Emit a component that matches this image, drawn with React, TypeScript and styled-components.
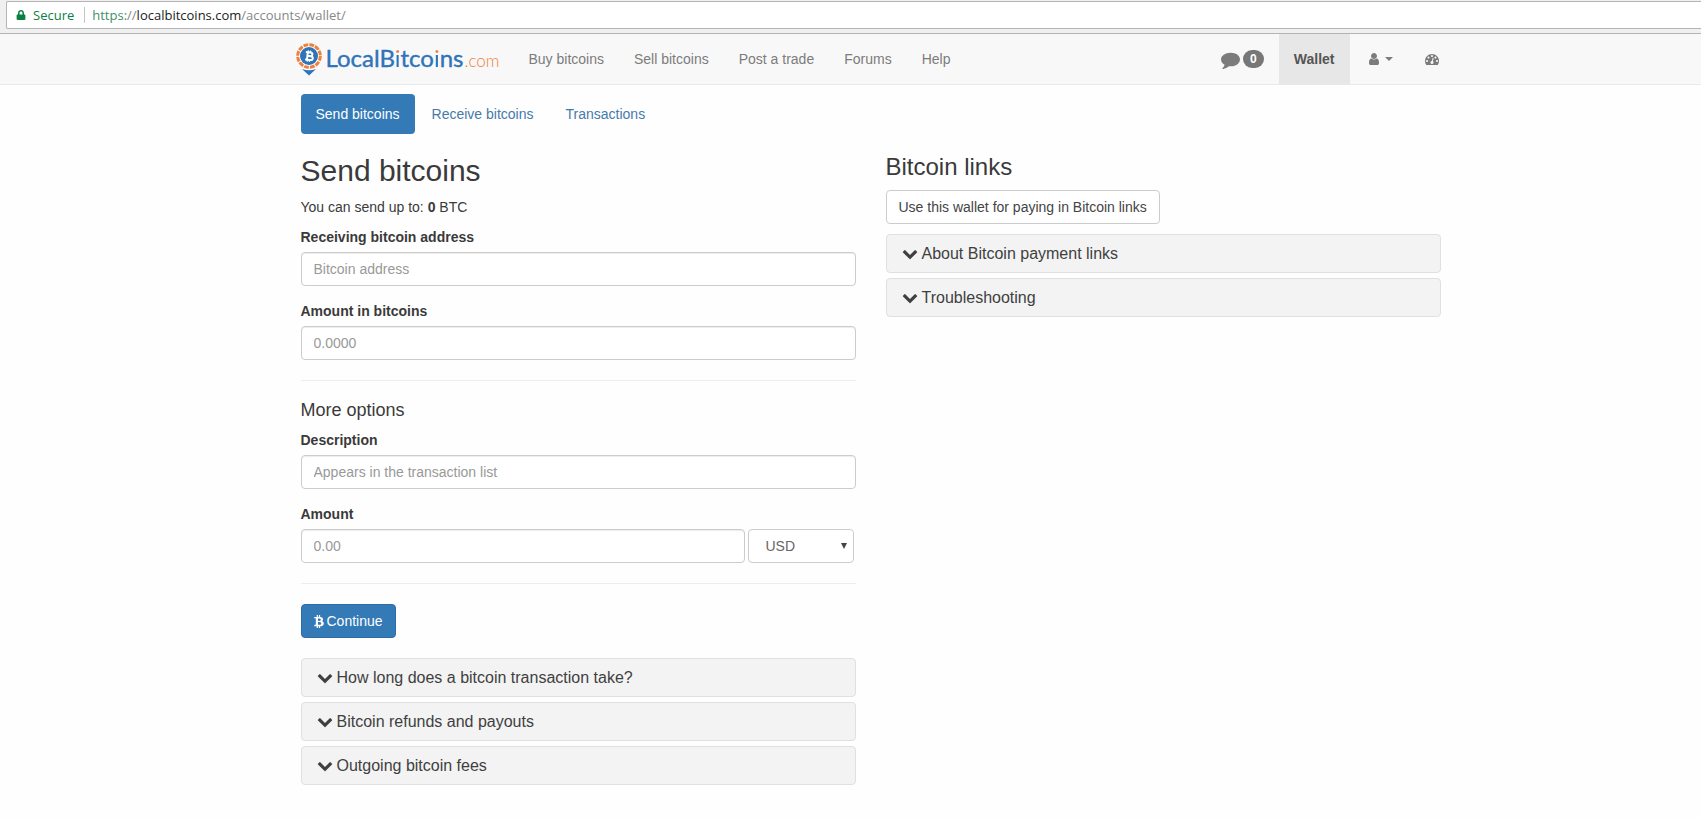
import React from "react";
import styled, { createGlobalStyle } from "styled-components";
import { FaBtc, FaLock } from "react-icons/fa";

const BLUE = "#337ab7";
const LOGO_BLUE = "#2f74b9";
const LOGO_ORANGE = "#ee7f3c";

const GlobalStyle = createGlobalStyle`
  *, *::before, *::after { box-sizing: border-box; }
  body {
    margin: 0;
    background: #fefefe;
    color: #3a3a3a;
    font: 14px/20px "Liberation Sans", Arial, sans-serif;
  }
  input, select, button { font: inherit; }
  a { text-decoration: none; }
`;

const AddressBar = styled.div`
  height: 34px;
  padding: 1px 0 4px 6px;
  background: #f0f0f0;
  border-bottom: 1px solid #b4b4b4;
`;

const AddressField = styled.div`
  display: flex;
  align-items: center;
  height: 28px;
  padding-left: 9px;
  background: #fff;
  border: 1px solid #b4b4b4;
  border-right: 0;
  border-radius: 2px 0 0 2px;
  font: 13px/20px "Open Sans", "Noto Sans", sans-serif;
  color: #878787;
`;

const Secure = styled.span`
  display: flex;
  align-items: center;
  gap: 7px;
  margin-right: 7px;
  padding-right: 10px;
  border-right: 1px solid #c4c4c4;
  line-height: 16px;
  color: #0b8043;
`;

const Scheme = styled.span`
  color: #3f8f66;
`;

const Host = styled.span`
  color: #222;
`;

const Offset = styled.div`
  padding-left: 40px;
`;

const Container = styled.div`
  max-width: 1170px;
  margin: 0 auto;
  padding: 0 15px;
`;

const Navbar = styled.header`
  background: #f8f8f8;
  border-bottom: 1px solid #e9e9e9;
`;

const NavInner = styled(Container)`
  display: flex;
  padding: 0 0 0 10px;
`;

const Brand = styled.a`
  display: flex;
  align-items: center;
  gap: 4px;
  width: 218px;
  height: 50px;
  color: ${LOGO_BLUE};
  white-space: nowrap;
`;

const BrandText = styled.span`
  display: flex;
  align-items: baseline;
  gap: 1px;
  font: 24px/30px Lato, "Open Sans", sans-serif;
`;

const BrandName = styled.span`
  -webkit-text-stroke: 0.4px currentColor;
`;

const DottedLetter = styled.span`
  background: linear-gradient(${LOGO_ORANGE} 0 10px, ${LOGO_BLUE} 10px);
  background-clip: text;
  -webkit-text-fill-color: transparent;
  -webkit-text-stroke: 0;
`;

const BrandSuffix = styled.span`
  font-size: 17px;
  font-weight: 300;
  color: ${LOGO_ORANGE};
`;

const NavGroup = styled.nav`
  display: flex;
`;

const NavEnd = styled(NavGroup)`
  margin-left: auto;
`;

const NavLink = styled.a<{ $active?: boolean }>`
  display: flex;
  align-items: center;
  padding: 15px;
  color: ${(p) => (p.$active ? "#555" : "#7c7c7c")};
  background: ${(p) => (p.$active ? "#e7e7e7" : "transparent")};
  font-weight: ${(p) => (p.$active ? 700 : 400)};
`;

const IconSlot = styled.span`
  display: flex;
  justify-content: center;
  width: 18px;
`;

const Caret = styled.span`
  margin-left: 2px;
  border: 4px solid transparent;
  border-top-color: currentColor;
  border-bottom: 0;
`;

const Badge = styled.span`
  margin-left: 3px;
  padding: 3px 7px;
  border-radius: 10px;
  background: #777;
  color: #fff;
  font-size: 12px;
  font-weight: 700;
  line-height: 12px;
`;

const Tabs = styled.nav`
  display: flex;
  gap: 2px;
  margin-top: 9px;
`;

const Tab = styled.a<{ $active?: boolean }>`
  padding: 10px 15px;
  border-radius: 4px;
  color: ${(p) => (p.$active ? "#fff" : "#467aa9")};
  background: ${(p) => (p.$active ? BLUE : "transparent")};
`;

const Columns = styled.main`
  display: grid;
  grid-template-columns: 1fr 1fr;
  gap: 30px;
  padding-top: 20px;
`;

const Title = styled.h1`
  margin: 0 0 10px;
  font-size: 30px;
  font-weight: 400;
  line-height: 33px;
`;

const SideTitle = styled.h2`
  margin: 0 0 10px;
  font-size: 24px;
  font-weight: 400;
  line-height: 26px;
`;

const OptionsTitle = styled.h3`
  margin: 0 0 10px;
  font-size: 18px;
  font-weight: 400;
  line-height: 19px;
`;

const Note = styled.p`
  margin: 0 0 10px;
`;

const Field = styled.div`
  margin-bottom: 15px;
`;

const Label = styled.label`
  display: block;
  margin-bottom: 5px;
  font-weight: 700;
`;

const Input = styled.input`
  width: 100%;
  height: 34px;
  padding: 6px 12px;
  border: 1px solid #ccc;
  border-radius: 4px;
  background: #fff;
  box-shadow: inset 0 1px 1px rgba(0, 0, 0, 0.075);
  color: #555;
  &::placeholder { color: #999; opacity: 1; }
`;

const AmountRow = styled.div`
  display: flex;
  gap: 3px;
  padding-right: 2px;
`;

const SelectWrap = styled.div`
  position: relative;
  flex: 0 0 106px;
`;

const Select = styled.select`
  width: 100%;
  height: 34px;
  padding: 6px 17px;
  appearance: none;
  border: 1px solid #ccc;
  border-radius: 4px;
  background: #fff;
  color: #666;
`;

const SelectArrow = styled.span`
  position: absolute;
  top: 14px;
  right: 7px;
  border: 3px solid transparent;
  border-top: 6px solid #444;
  border-bottom: 0;
  pointer-events: none;
`;

const Divider = styled.hr`
  margin: 20px 0;
  border: 0;
  border-top: 1px solid #eee;
`;

const Button = styled.button<{ $primary?: boolean }>`
  display: flex;
  align-items: center;
  gap: 3px;
  height: 34px;
  padding: 6px 12px;
  border: 1px solid ${(p) => (p.$primary ? "#2e6da4" : "#ccc")};
  border-radius: 4px;
  background: ${(p) => (p.$primary ? BLUE : "#fff")};
  color: ${(p) => (p.$primary ? "#fff" : "#444")};
`;

const CoinIcon = styled(FaBtc)`
  width: 10px;
  height: 13px;
`;

const PanelList = styled.div<{ $space: number }>`
  display: flex;
  flex-direction: column;
  gap: 5px;
  margin-top: ${(p) => p.$space}px;
`;

const Panel = styled.button`
  display: flex;
  align-items: center;
  gap: 4px;
  padding: 10px 15px;
  border: 1px solid #e0e0e0;
  border-radius: 4px;
  background: #f3f3f3;
  color: #3f3f3f;
  font-size: 16px;
  line-height: 17px;
  text-align: left;
`;

const GLYPHS = {
  comment:
    "M1792 896q0 174-120 321.5t-326 233-450 85.5q-70 0-145-8-198 175-460 242-49 14-114 22-17 2-30.5-9t-17.5-29v-1q-3-4-.5-12t2-10 4.5-9.5l6-9 7-8.5 8-9q7-8 31-34.5t34.5-38 31-39.5 32.5-51 27-59 26-76q-157-89-247.5-220t-90.5-281q0-130 71-248.5t191-204.5 286-136.5 348-50.5q244 0 450 85.5t326 233 120 321.5z",
  user:
    "M1536 1399q0 109-62.5 187t-150.5 78h-854q-88 0-150.5-78t-62.5-187q0-85 8.5-160.5t31.5-152 58.5-131 94-89 134.5-34.5q131 128 313 128t313-128q76 0 134.5 34.5t94 89 58.5 131 31.5 152 8.5 160.5zm-256-887q0 159-112.5 271.5t-271.5 112.5-271.5-112.5-112.5-271.5 112.5-271.5 271.5-112.5 271.5 112.5 112.5 271.5z",
  dashboard:
    "M384 1152q0-53-37.5-90.5t-90.5-37.5-90.5 37.5-37.5 90.5 37.5 90.5 90.5 37.5 90.5-37.5 37.5-90.5zm192-448q0-53-37.5-90.5t-90.5-37.5-90.5 37.5-37.5 90.5 37.5 90.5 90.5 37.5 90.5-37.5 37.5-90.5zm428 481l101-382q6-26-7.5-48.5t-38.5-29.5-48 6.5-30 39.5l-101 382q-60 5-107 43.5t-63 98.5q-20 77 20 146t117 89 146-20 89-117q16-60-6-117t-72-91zm660-33q0-53-37.5-90.5t-90.5-37.5-90.5 37.5-37.5 90.5 37.5 90.5 90.5 37.5 90.5-37.5 37.5-90.5zm-640-640q0-53-37.5-90.5t-90.5-37.5-90.5 37.5-37.5 90.5 37.5 90.5 90.5 37.5 90.5-37.5 37.5-90.5zm448 192q0-53-37.5-90.5t-90.5-37.5-90.5 37.5-37.5 90.5 37.5 90.5 90.5 37.5 90.5-37.5 37.5-90.5zm320 448q0 261-141 483-19 29-54 29h-1402q-35 0-54-29-141-221-141-483 0-182 71-348t191-286 286-191 348-71 348 71 286 191 191 286 71 348z",
  chevron:
    "M1683 728l-742 741q-19 19-45 19t-45-19l-742-741q-19-19-19-45.500t19-45.500l166-165q19-19 45-19t45 19l531 531 531-531q19-19 45-19t45 19l166 165q19 19 19 45.500t-19 45.500z",
};

function Glyph({ name, size }: { name: keyof typeof GLYPHS; size: number }) {
  return (
    <svg width={size} height={size} viewBox="0 0 1792 1792" fill="currentColor" aria-hidden="true">
      <path d={GLYPHS[name]} />
    </svg>
  );
}

function LogoMark() {
  return (
    <svg width="26" height="34" viewBox="0 0 26 34" aria-hidden="true">
      <path d="M6 27Q13 29.500 20 27L13 33.500Z" fill={LOGO_BLUE} />
      <circle cx="13" cy="14" r="11.300" fill="#fff" stroke={LOGO_ORANGE} strokeWidth="3" strokeDasharray="4.800 1.117" />
      <circle cx="13" cy="14" r="9" fill={LOGO_BLUE} />
      <g transform="rotate(6 13 14)" fill="none" stroke="#fff" strokeWidth="2">
        <path d="M9.500 10.400H14Q16.200 10.400 16.200 12.200T14 14H11H14.500Q17 14 17 16T14.500 17.900H9.500M11.400 10.400V17.900" />
        <path d="M11.800 8.500V10.400M14 8.500V10.400M11.800 17.900V19.800M14 17.900V19.800" strokeWidth="1.300" />
      </g>
    </svg>
  );
}

function PanelItem({ children }: { children: React.ReactNode }) {
  return (
    <Panel type="button" aria-expanded="false">
      <Glyph name="chevron" size={16} />
      {children}
    </Panel>
  );
}

const navItems = ["Buy bitcoins", "Sell bitcoins", "Post a trade", "Forums", "Help"];
const faqItems = ["How long does a bitcoin transaction take?", "Bitcoin refunds and payouts", "Outgoing bitcoin fees"];
const linkItems = ["About Bitcoin payment links", "Troubleshooting"];

export default function App() {
  return (
    <>
      <GlobalStyle />
      <AddressBar>
        <AddressField>
          <Secure>
            <FaLock size={10} />
            Secure
          </Secure>
          <span>
            <Scheme>https:</Scheme>//<Host>localbitcoins.com</Host>/accounts/wallet/
          </span>
        </AddressField>
      </AddressBar>

      <Navbar>
        <Offset>
          <NavInner>
            <Brand href="#">
              <LogoMark />
              <BrandText>
                <BrandName>
                  LocalB<DottedLetter>i</DottedLetter>tco<DottedLetter>i</DottedLetter>ns
                </BrandName>
                <BrandSuffix>.com</BrandSuffix>
              </BrandText>
            </Brand>
            <NavGroup>
              {navItems.map((item) => (
                <NavLink href="#" key={item}>{item}</NavLink>
              ))}
            </NavGroup>
            <NavEnd>
              <NavLink href="#" aria-label="Messages, 0 unread">
                <Glyph name="comment" size={19} />
                <Badge>0</Badge>
              </NavLink>
              <NavLink href="#" $active>Wallet</NavLink>
              <NavLink href="#" aria-label="Account">
                <IconSlot><Glyph name="user" size={14} /></IconSlot>
                <Caret />
              </NavLink>
              <NavLink href="#" aria-label="Dashboard">
                <IconSlot><Glyph name="dashboard" size={14} /></IconSlot>
              </NavLink>
            </NavEnd>
          </NavInner>
        </Offset>
      </Navbar>

      <Offset>
        <Container>
          <Tabs>
            <Tab href="#" $active>Send bitcoins</Tab>
            <Tab href="#">Receive bitcoins</Tab>
            <Tab href="#">Transactions</Tab>
          </Tabs>

          <Columns>
            <section>
              <Title>Send bitcoins</Title>
              <Note>You can send up to: <b>0</b> BTC</Note>
              <Field>
                <Label htmlFor="address">Receiving bitcoin address</Label>
                <Input id="address" placeholder="Bitcoin address" />
              </Field>
              <Label htmlFor="btc">Amount in bitcoins</Label>
              <Input id="btc" placeholder="0.0000" />
              <Divider />
              <OptionsTitle>More options</OptionsTitle>
              <Field>
                <Label htmlFor="description">Description</Label>
                <Input id="description" placeholder="Appears in the transaction list" />
              </Field>
              <Label htmlFor="amount">Amount</Label>
              <AmountRow>
                <Input id="amount" placeholder="0.00" />
                <SelectWrap>
                  <Select aria-label="Currency" defaultValue="USD">
                    <option>USD</option>
                    <option>EUR</option>
                    <option>GBP</option>
                  </Select>
                  <SelectArrow />
                </SelectWrap>
              </AmountRow>
              <Divider />
              <Button type="submit" $primary>
                <CoinIcon />
                Continue
              </Button>
              <PanelList $space={20}>
                {faqItems.map((item) => <PanelItem key={item}>{item}</PanelItem>)}
              </PanelList>
            </section>

            <section>
              <SideTitle>Bitcoin links</SideTitle>
              <Button type="button">Use this wallet for paying in Bitcoin links</Button>
              <PanelList $space={10}>
                {linkItems.map((item) => <PanelItem key={item}>{item}</PanelItem>)}
              </PanelList>
            </section>
          </Columns>
        </Container>
      </Offset>
    </>
  );
}
